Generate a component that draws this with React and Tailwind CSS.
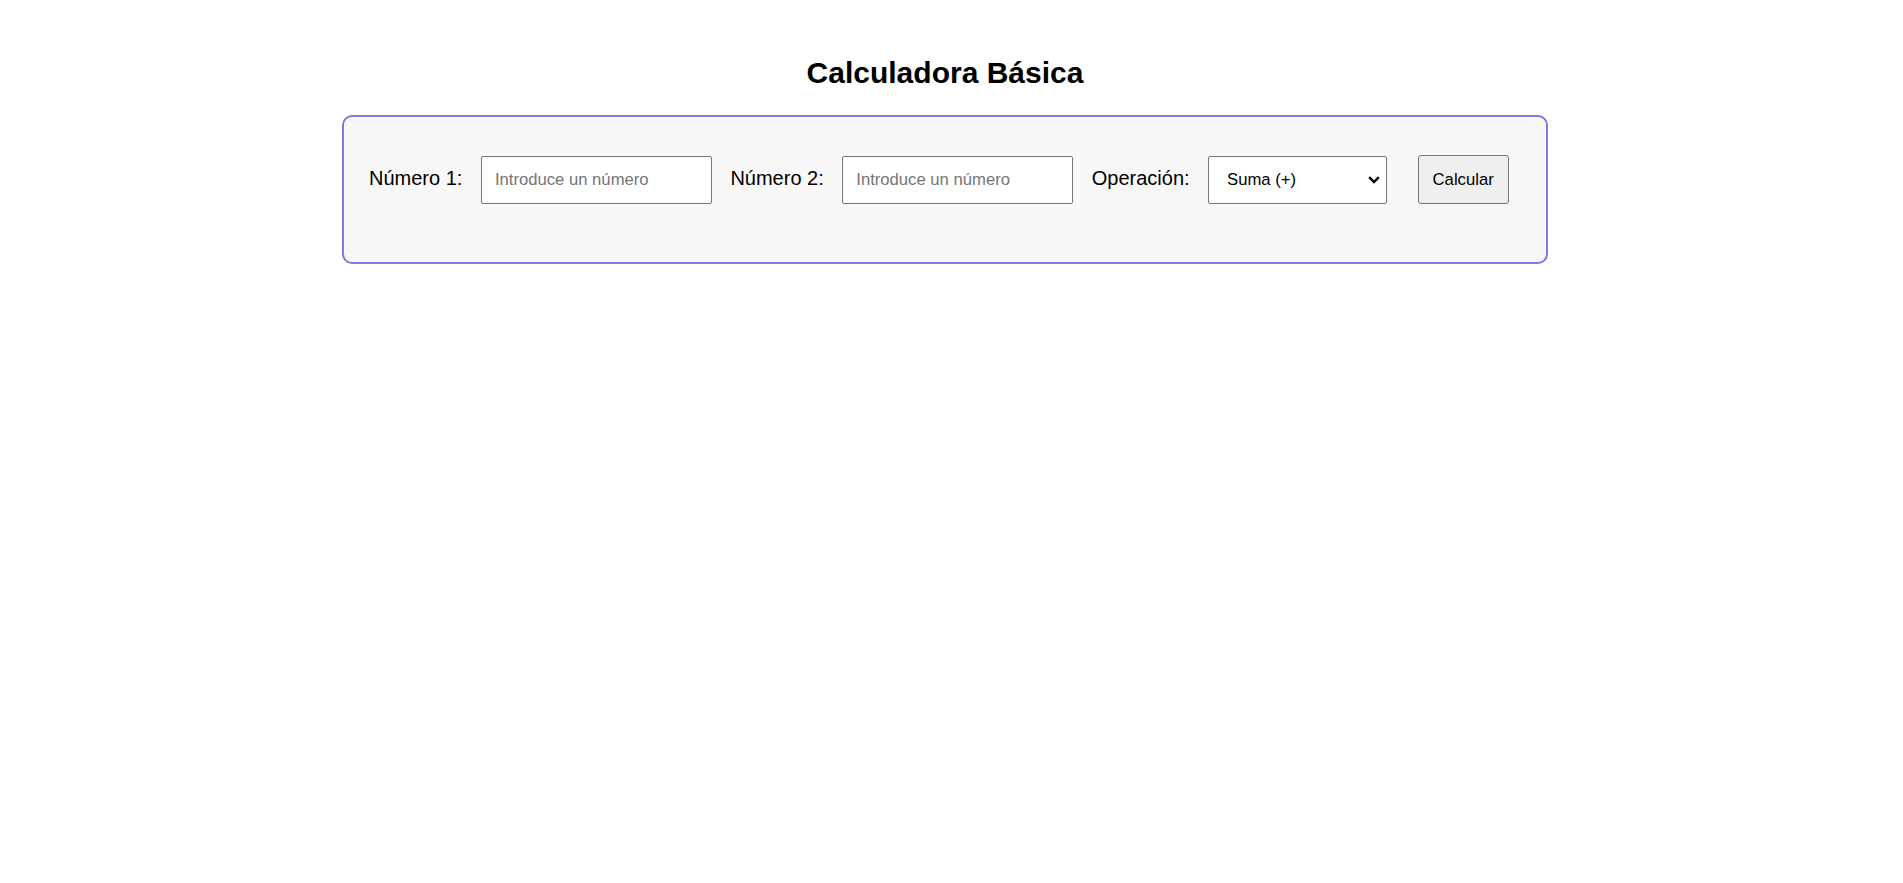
import { useState } from 'react';

export default function App() {
  const [num1, setNum1] = useState('');
  const [num2, setNum2] = useState('');
  const [op, setOp] = useState('suma');
  const [result, setResult] = useState(null);

  const handleCalc = () => {
    const a = parseFloat(num1);
    const b = parseFloat(num2);
    if (isNaN(a) || isNaN(b)) {
      setResult('Introduce dos números válidos');
      return;
    }
    if (op === 'suma') setResult(a + b);
    else if (op === 'resta') setResult(a - b);
    else if (op === 'multiplicacion') setResult(a * b);
    else setResult(b === 0 ? 'No se puede dividir entre 0' : a / b);
  };

  const inputCls =
    'h-[48px] w-[231px] shrink-0 rounded-[2px] border border-[#767676] bg-white px-[13px] text-[16.67px] text-black placeholder:text-[#757575] outline-none';

  return (
    <div className="min-h-screen bg-white font-['Liberation_Sans',Arial,sans-serif] text-black">
      <div className="w-[1890px] pt-[55px]">
        <h1 className="text-center text-[30px] font-bold leading-[36px]">Calculadora Básica</h1>

        <div className="mx-auto mt-[24px] w-[1206px] rounded-[10px] border-2 border-[#8874e0] bg-[#f8f8f8] px-[25px] pt-[38px] pb-[58px]">
          <div className="flex items-center gap-[18.5px]">
            <label className="mb-[3px] text-[20px] leading-[23px]">Número 1:</label>
            <input
              type="number"
              value={num1}
              onChange={(e) => setNum1(e.target.value)}
              placeholder="Introduce un número"
              className={inputCls}
            />
            <label className="mb-[3px] text-[20px] leading-[23px]">Número 2:</label>
            <input
              type="number"
              value={num2}
              onChange={(e) => setNum2(e.target.value)}
              placeholder="Introduce un número"
              className={inputCls}
            />
            <label className="mb-[3px] text-[20px] leading-[23px]">Operación:</label>
            <div className="relative h-[48px] w-[179px] shrink-0">
              <select
                value={op}
                onChange={(e) => setOp(e.target.value)}
                className="h-full w-full appearance-none rounded-[2px] border border-[#767676] bg-white pl-[18px] text-[16.67px] text-black outline-none"
              >
                <option value="suma">Suma (+)</option>
                <option value="resta">Resta (-)</option>
                <option value="multiplicacion">Multiplicación (×)</option>
                <option value="division">División (÷)</option>
              </select>
              <svg
                className="pointer-events-none absolute right-[7px] top-[20px]"
                width="12"
                height="8"
                viewBox="0 0 12 8"
                fill="none"
              >
                <path d="M1.2 1.2 L6 6 L10.8 1.2" stroke="#000" strokeWidth="2.4" />
              </svg>
            </div>
            <button
              onClick={handleCalc}
              className="ml-[12px] h-[49px] shrink-0 rounded-[3px] border border-[#767676] bg-[#efefef] px-[14px] text-[16.67px] text-black"
            >
              Calcular
            </button>
          </div>
          {result !== null && (
            <p className="mt-[20px] text-[20px]">Resultado: {result}</p>
          )}
        </div>
      </div>
    </div>
  );
}
